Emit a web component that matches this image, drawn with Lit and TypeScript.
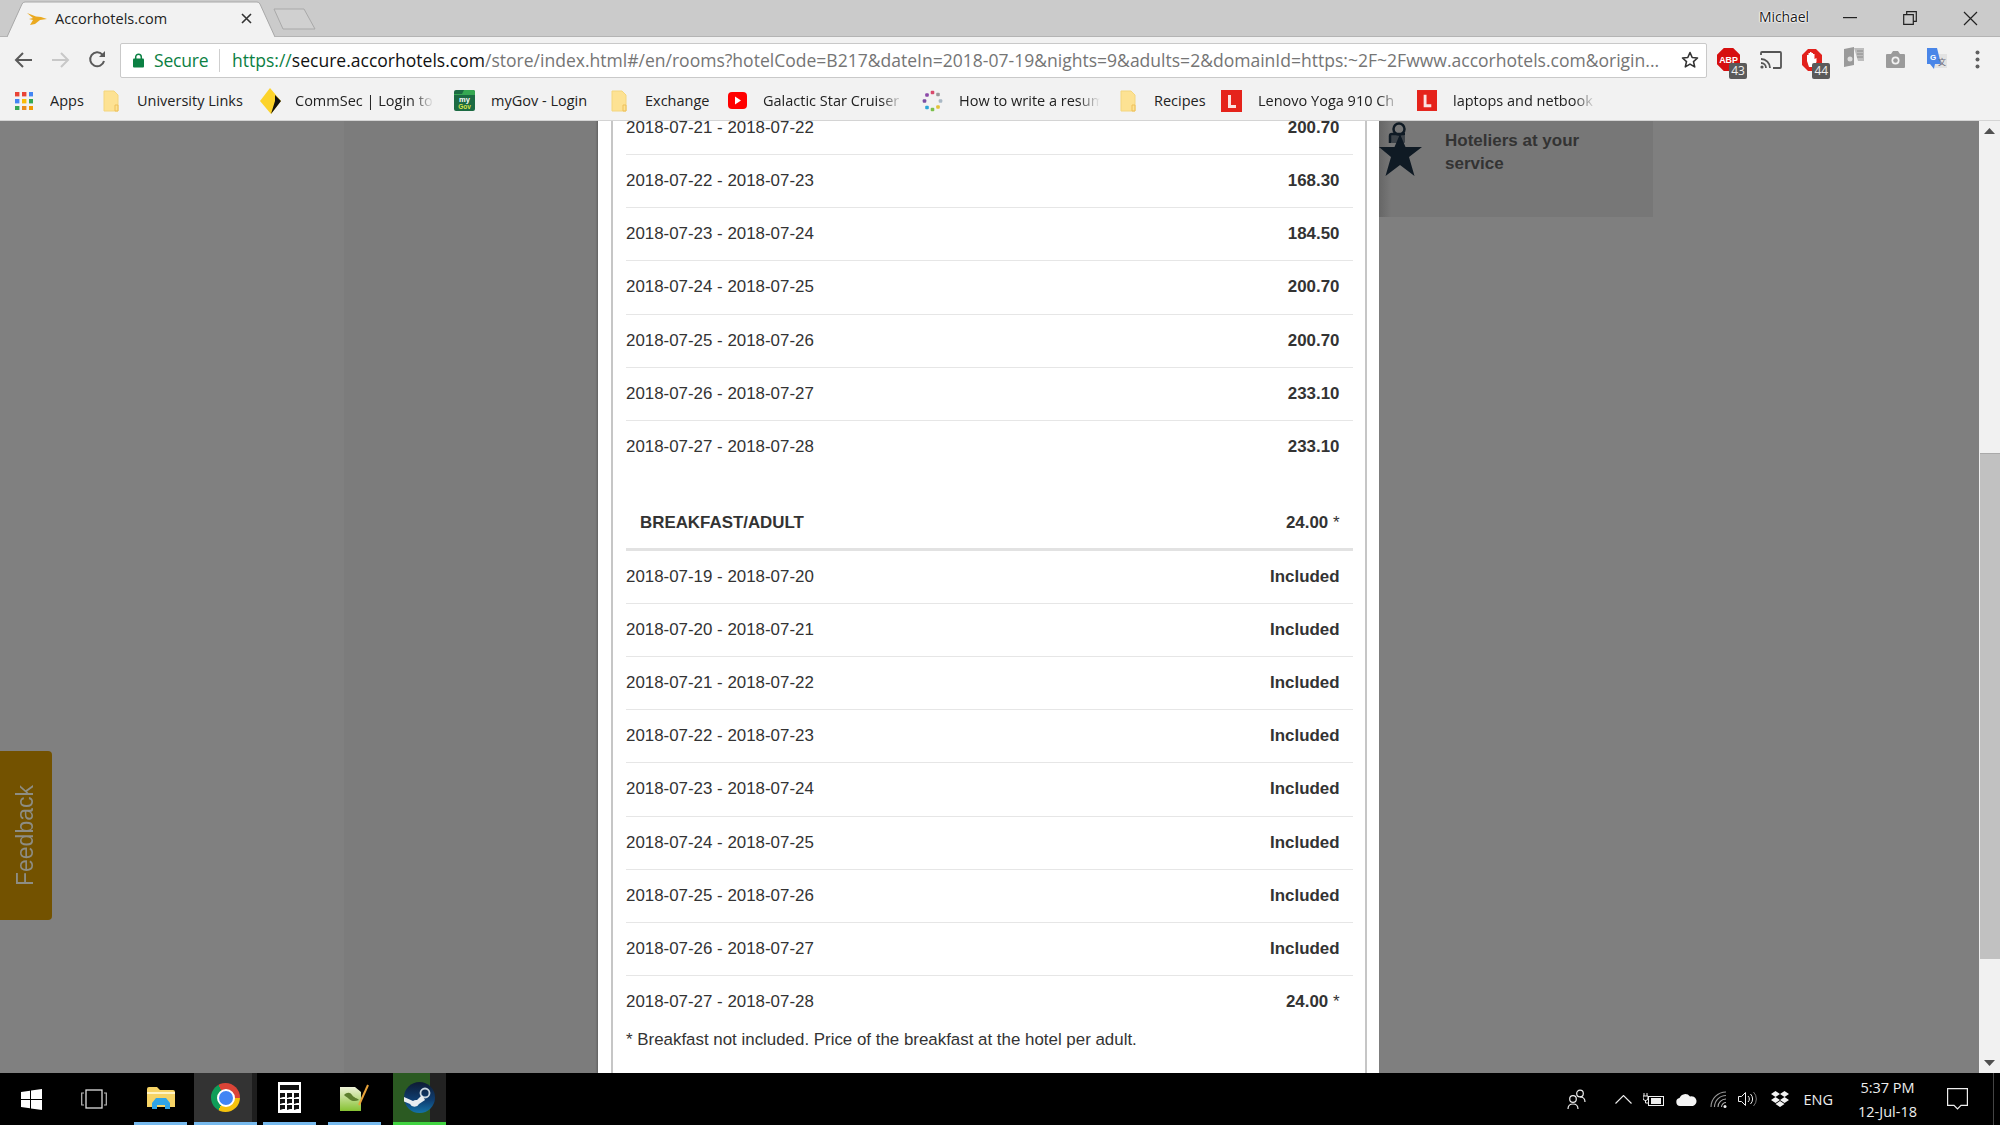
import { LitElement, html, css, svg } from "lit";
import { customElement } from "lit/decorators.js";

const folder = svg`<svg width="16" height="22" viewBox="0 0 16 22"><path d="M1 1h10l4 4v16H1z" fill="#fde293" stroke="#f4d67e"/><path d="M12 15h3v6h-3z" fill="none" stroke="#eec05a"/></svg>`;
const redL = (w: number) => svg`<svg width="${w}" height="${w + 1}" viewBox="0 0 21 22"><rect width="21" height="22" fill="#e5231b"/><path d="M7 5h3v10h5v3H7z" fill="#fbe3e1"/></svg>`;

type Bm = { n: string; w: number; g: number; lw: number; fade?: boolean; icon: unknown };
const bookmarks: Bm[] = [
  { n: "Apps", w: 88, g: 35, lw: 40, icon: svg`<svg width="18" height="18" viewBox="0 0 18 18">
    ${[0, 7, 14].map((y, r) => [0, 7, 14].map((x, c) => svg`<rect x="${x}" y="${y}" width="4.4" height="4.4" fill="${[["#e94335", "#e94335", "#4285f4"], ["#4285f4", "#fbbc05", "#34a853"], ["#34a853", "#ea8a1c", "#f29900"]][r][c]}"/>`))}</svg>` },
  { n: "University Links", w: 156, g: 34, lw: 110, icon: folder },
  { n: "CommSec | Login to", w: 195, g: 36, lw: 139, fade: true, icon: svg`<svg width="23" height="28" viewBox="0 0 23 28"><path d="M11 1l11 13-10 13L1 14z" fill="#fcd32a"/><path d="M16 8l6 6-10 13 4-13z" fill="#111"/></svg>` },
  { n: "myGov - Login", w: 157, g: 37, lw: 108, icon: svg`<svg width="21" height="21" viewBox="0 0 21 21"><rect width="21" height="21" rx="2" fill="#1c6b43"/><path d="M0 5h21V2a2 2 0 00-2-2H10L8 4H0z" fill="#36a852"/><text x="10.5" y="12" text-anchor="middle" font-size="7.5" font-weight="700" font-family="Liberation Sans" fill="#fff">my</text><text x="10.5" y="19" text-anchor="middle" font-size="6.5" font-weight="700" font-family="Liberation Sans" fill="#d8e24a">Gov</text></svg>` },
  { n: "Exchange", w: 117, g: 34, lw: 70, icon: folder },
  { n: "Galactic Star Cruiser", w: 194, g: 35, lw: 140, fade: true, icon: svg`<svg width="19" height="17" viewBox="0 0 19 17"><rect width="19" height="17" rx="4" fill="#f00"/><path d="M7 4.500l6 4-6 4z" fill="#fff"/></svg>` },
  { n: "How to write a resume", w: 198, g: 37, lw: 141, fade: true, icon: svg`<svg width="21" height="22" viewBox="0 0 21 22">
    ${[["10.5", "2.5", "#d94a6c"], ["16", "4.5", "#9a9a9a"], ["18.5", "11", "#a9b8c4"], ["16", "17", "#e3c23a"], ["10.5", "19.5", "#7cc04b"], ["5", "17.5", "#2ba6d8"], ["2.5", "11", "#7a4fa3"], ["5", "5", "#8c4aa8"]].map(([x, y, f]) => svg`<rect x="${+x - 1.8}" y="${+y - 1.8}" width="3.6" height="3.6" rx="1" fill="${f}"/>`)}</svg>` },
  { n: "Recipes", w: 101, g: 34, lw: 60, icon: folder },
  { n: "Lenovo Yoga 910 Ch", w: 196, g: 37, lw: 142, fade: true, icon: redL(21) },
  { n: "laptops and netbook", w: 190, g: 36, lw: 143, fade: true, icon: redL(20) },
];

const rates = [
  ["2018-07-21 - 2018-07-22", "200.70"],
  ["2018-07-22 - 2018-07-23", "168.30"],
  ["2018-07-23 - 2018-07-24", "184.50"],
  ["2018-07-24 - 2018-07-25", "200.70"],
  ["2018-07-25 - 2018-07-26", "200.70"],
  ["2018-07-26 - 2018-07-27", "233.10"],
  ["2018-07-27 - 2018-07-28", "233.10"],
];
const breakfast = [
  "2018-07-19 - 2018-07-20",
  "2018-07-20 - 2018-07-21",
  "2018-07-21 - 2018-07-22",
  "2018-07-22 - 2018-07-23",
  "2018-07-23 - 2018-07-24",
  "2018-07-24 - 2018-07-25",
  "2018-07-25 - 2018-07-26",
  "2018-07-26 - 2018-07-27",
];

@customElement("app-root")
export class AppRoot extends LitElement {
  static styles = css`
    :host { display: flex; flex-direction: column; width: 2000px; height: 1125px; overflow: hidden; font-family: "Liberation Sans", Arial, sans-serif; color: #333; }
    .ui { font-family: "Open Sans", "Noto Sans", sans-serif; }

    .strip { height: 37px; flex: none; background: #cbcbcb; border-bottom: 1px solid #b4b4b4; box-sizing: border-box; display: flex; align-items: flex-start; }
    .tab { position: relative; width: 268px; height: 37px; margin-left: 7px; display: flex; align-items: center; flex: none; }
    .tab-shape { position: absolute; inset: 0; }
    .tab > :not(.tab-shape) { position: relative; }
    .tab-logo { margin-left: 20px; }
    .tab-title { margin-left: 8px; width: 186px; font-size: 14.5px; color: #222; }
    .newtab { margin: 8px 0 0 -2px; }
    .who { margin-left: auto; width: 50px; margin-top: 8px; font-size: 14px; line-height: 18px; color: #1a1a1a; letter-spacing: -0.1px; white-space: nowrap; text-shadow: 0 0 2px #fff, 0 0 2px #fff, 0 0 2px #fff, 0 0 1px #fff; }
    .winbtns { display: flex; margin-left: 11px; height: 36px; align-items: center; }
    .winbtn { width: 60px; height: 36px; display: flex; align-items: center; justify-content: center; }

    .toolbar { height: 45px; flex: none; background: #f2f2f2; display: flex; align-items: center; }
    .nav { display: flex; align-items: center; width: 120px; flex: none; padding-left: 14px; gap: 18px; box-sizing: border-box; }
    .omni { width: 1587px; height: 35px; flex: none; box-sizing: border-box; background: #fff; border: 1px solid #c9c9c9; border-radius: 2px; display: flex; align-items: center; margin-top: 1px; }
    .lock { margin-left: 12px; flex: none; }
    .secure { margin-left: 10px; width: 55px; color: #0b8043; font-size: 17.5px; letter-spacing: -0.2px; flex: none; }
    .sep { width: 1px; height: 23px; background: #cfcfcf; margin: 0 12px 0 10px; flex: none; }
    .url { width: 1427px; flex: none; white-space: nowrap; overflow: hidden; font-size: 17.55px; color: #757575; }
    .url .g { color: #0b8043; }
    .url .h { color: #111; }
    .omnistar { margin-left: 22px; flex: none; }
    .exts { display: flex; align-items: center; margin-left: 1px; }
    .ext { position: relative; width: 41.7px; height: 36px; display: flex; align-items: center; justify-content: center; }
    .ext.dots { width: 38px; }
    .raised { margin-top: -6px; }
    .badge { position: absolute; left: 21px; top: 21px; width: 18px; height: 16px; background: #5a5a5a; border-radius: 2px; color: #f0f0f0; font-size: 12px; line-height: 16px; text-align: center; }

    .bookmarks { height: 39px; flex: none; background: #f2f2f2; border-bottom: 1px solid #d4d4d4; box-sizing: border-box; display: flex; align-items: center; padding: 0 0 1px 15px; }
    .bm { display: flex; align-items: center; flex: none; }
    .bm-icon { display: flex; align-items: center; flex: none; }
    .bm-label { font-size: 14.5px; color: #222; white-space: nowrap; overflow: hidden; }
    .fade { -webkit-mask-image: linear-gradient(to right, #000 calc(100% - 22px), transparent); mask-image: linear-gradient(to right, #000 calc(100% - 22px), transparent); }

    .page { flex: 1; min-height: 0; display: flex; position: relative; overflow: hidden; background: #7f7f7f; }
    .gutter { width: 598px; flex: none; display: flex; }
    .g1 { width: 344px; background: #808080; }
    .g2 { flex: 1; background: #7c7c7c; }
    .panel { width: 781px; flex: none; background: #fff; padding: 0 12px 0 13px; box-sizing: border-box; margin-top: -19px; box-shadow: -1px 0 2px rgba(0,0,0,.25); }
    .box { height: 100%; border-left: 2px solid #c6c6c6; border-right: 2px solid #c6c6c6; padding: 0 12.5px 0 13px; box-sizing: border-box; }
    .row { height: 53.125px; box-sizing: border-box; display: flex; align-items: center; justify-content: space-between; padding-right: 13px; font-size: 16.9px; border-bottom: 1.5px solid #e6e6e6; }
    .row.last { border-bottom: none; }
    .row b { font-weight: 700; }
    .asterisk { font-weight: 400; }
    .head { height: 77px; box-sizing: border-box; display: flex; align-items: flex-end; justify-content: space-between; padding: 0 13px 14.5px 14px; font-size: 16.9px; line-height: 20px; font-weight: 700; border-bottom: 3px solid #e2e2e2; }
    .note { font-size: 16.9px; line-height: 20px; margin-top: 1px; }
    .side { flex: 1; display: block; }
    .card { width: 274px; height: 96px; background: linear-gradient(to right, #666 0, #777 12px); display: flex; }
    .star { flex: none; }
    .card-text { margin: 8px 0 0 22px; font-size: 17px; line-height: 23px; font-weight: 700; color: #333; }
    .sb { width: 21px; flex: none; background: #f1f1f1; display: flex; flex-direction: column; align-items: center; }
    .sb-up { margin-top: 7px; flex: none; }
    .sb-thumb { width: 20px; height: 506px; background: #c1c1c1; margin: 319px 0 0 1px; flex: none; border-top: 1px solid #aaa; box-sizing: border-box; }
    .sb-down { margin-top: auto; margin-bottom: 7px; flex: none; }
    .feedback { position: absolute; left: 0; top: 630px; width: 52px; height: 169px; box-sizing: border-box; padding-right: 2px; background: #735200; border-radius: 0 4px 4px 0; display: flex; align-items: center; justify-content: center; }
    .feedback span { writing-mode: vertical-rl; transform: rotate(180deg); font-size: 23px; color: #8d8d84; line-height: 1; }

    .taskbar { height: 52px; flex: none; background: #000; display: flex; align-items: stretch; color: #f0f0f0; }
    .ts { width: 63px; flex: none; display: flex; align-items: center; justify-content: center; }
    .ts.tv { width: 62px; }
    .tapp { width: 53px; flex: none; margin: 0 6px; box-sizing: border-box; border-bottom: 3px solid #76b9ed; display: flex; align-items: center; justify-content: center; }
    .tapp.first { margin: 0 7px 0 9px; }
    .tapp.chrome { width: 63px; margin: 0; background: linear-gradient(to right, #333 0 58px, #1e1e1e 58px); }
    .tapp.steam { background: linear-gradient(to right, #2b5a22 0 37px, #222 37px); border-bottom-color: #3fd33f; }
    .chrome-logo { width: 29px; height: 29px; border-radius: 50%; background: conic-gradient(from -30deg, #db4437 0 120deg, #f4c20d 120deg 240deg, #0f9d58 240deg 360deg); display: flex; align-items: center; justify-content: center; }
    .chrome-logo i { width: 14px; height: 14px; border-radius: 50%; background: #4285f4; border: 2.5px solid #fff; }
    .tray { margin-left: auto; display: flex; align-items: center; }
    .tray-item { flex: none; display: flex; align-items: center; justify-content: center; }
    .m29 { margin-right: 29px; }
    .m11 { margin-right: 11px; }
    .m13 { margin-right: 13px; }
    .eng { font-size: 14.5px; margin-left: 15px; width: 30px; color: #eee; }
    .clock { width: 92px; margin-left: 8px; padding-top: 1px; text-align: center; font-size: 14.5px; line-height: 24px; color: #eee; }
    .notif { margin-left: 13.5px; }
    .desk { width: 1px; align-self: stretch; background: #444; margin-left: 25px; margin-right: 6px; }
  `;

  render() {
    return html`
      <div class="strip ui">
        <div class="tab">
          <svg class="tab-shape" width="268" height="37" viewBox="0 0 268 37"><path d="M0 37 L15 4 Q16 2 18 2 H250 Q252 2 253 4 L268 37" fill="#f2f2f2" stroke="#a8a8a8"/></svg>
          <svg class="tab-logo" width="20" height="14" viewBox="0 0 20 14"><path d="M0 1l9 3.500 5 .5 6 2-7 1-5 4-5 1 3-5-4-1 4-1z" fill="#eaa91f"/></svg>
          <span class="tab-title">Accorhotels.com</span>
          <svg width="11" height="11" viewBox="0 0 11 11"><path d="M1 1l9 9M10 1l-9 9" stroke="#333" stroke-width="1.6"/></svg>
        </div>
        <svg class="newtab" width="44" height="22" viewBox="0 0 44 22"><path d="M1 1h30l11 20H10z" fill="#d0d0d0" stroke="#a9a9a9" stroke-linejoin="round"/></svg>
        <span class="who">Michael</span>
        <div class="winbtns">
          <div class="winbtn"><svg width="14" height="2" viewBox="0 0 14 2"><rect width="14" height="1.2" fill="#222"/></svg></div>
          <div class="winbtn"><svg width="14" height="14" viewBox="0 0 14 14"><path d="M.7 3.700h9.600v9.600H.7zM3.700 3.500V.7h9.600v9.600h-2.800" fill="none" stroke="#222" stroke-width="1.2"/></svg></div>
          <div class="winbtn"><svg width="15" height="15" viewBox="0 0 15 15"><path d="M1 1l13 13M14 1L1 14" stroke="#222" stroke-width="1.2"/></svg></div>
        </div>
      </div>

      <div class="toolbar ui">
        <div class="nav">
          <svg width="19" height="18" viewBox="0 0 19 18"><path d="M18 9H2M9 2L2 9l7 7" fill="none" stroke="#5a5a5a" stroke-width="2"/></svg>
          <svg width="19" height="18" viewBox="0 0 19 18"><path d="M1 9h16M10 2l7 7-7 7" fill="none" stroke="#c8c8c8" stroke-width="2"/></svg>
          <svg width="19" height="19" viewBox="0 0 19 19"><path d="M16 11a7 7 0 1 1-1.600-6.400" fill="none" stroke="#5a5a5a" stroke-width="2"/><path d="M17 1v6h-6z" fill="#5a5a5a"/></svg>
        </div>
        <div class="omni">
          <svg class="lock" width="11" height="15" viewBox="0 0 11 15"><path d="M2.700 6V4a2.800 2.800 0 0 1 5.600 0v2" fill="none" stroke="#0b8043" stroke-width="1.5"/><rect y="5.500" width="11" height="9" rx="1" fill="#0b8043"/></svg>
          <span class="secure">Secure</span>
          <span class="sep"></span>
          <span class="url"><span class="g">https://</span><span class="h">secure.accorhotels.com</span>/store/index.html#/en/rooms?hotelCode=B217&amp;dateIn=2018-07-19&amp;nights=9&amp;adults=2&amp;domainId=https:~2F~2Fwww.accorhotels.com&amp;origin...</span>
          <svg class="omnistar" width="18" height="18" viewBox="0 0 18 18"><path d="M9 1.500l2.200 5 5.300.5-4 3.600 1.200 5.300L9 13.100l-4.700 2.800 1.200-5.300-4-3.600 5.300-.5z" fill="none" stroke="#333" stroke-width="1.6" stroke-linejoin="round"/></svg>
        </div>
        <div class="exts">
          <div class="ext">
            <svg width="23" height="23" viewBox="0 0 22 22"><path d="M6.500 0h9L22 6.500v9L15.500 22h-9L0 15.500v-9z" fill="#d60f0f"/><text x="11" y="14" text-anchor="middle" font-size="8.500" font-weight="700" font-family="Liberation Sans" fill="#fff">ABP</text></svg>
            <span class="badge">43</span>
          </div>
          <div class="ext">
            <svg width="22" height="18" viewBox="0 0 22 18"><path d="M1 4V2a1 1 0 0 1 1-1h18a1 1 0 0 1 1 1v14a1 1 0 0 1-1 1h-7" fill="none" stroke="#555" stroke-width="1.800"/><path d="M1 8a9 9 0 0 1 9 9M1 12a5 5 0 0 1 5 5" fill="none" stroke="#555" stroke-width="1.800"/><circle cx="2" cy="16" r="1.600" fill="#555"/></svg>
          </div>
          <div class="ext">
            <svg width="20" height="22" viewBox="0 0 20 22"><path d="M6 0h8l6 6v10l-6 6H6l-6-6V6z" fill="#e2211c"/><path d="M5 12V6h1.500v-2h1.500v-1h1.500v1h1.500v1h1.500v5l2-1v4l-3 5H7z" fill="#fff"/></svg>
            <span class="badge">44</span>
          </div>
          <div class="ext">
            <svg class="raised" width="20" height="20" viewBox="0 0 20 20"><path d="M0 2l10-2v18l-10 2z" fill="#9a9a9a"/><path d="M10 1h10v13h-6" fill="#bdbdbd"/><path d="M13 4h6M13 7h6M13 10h6" stroke="#8a8a8a"/><circle cx="6" cy="12" r="2.500" fill="#dedede"/></svg>
          </div>
          <div class="ext">
            <svg width="19" height="17" viewBox="0 0 19 17"><path d="M1 3h4l2-3h5l2 3h4a1 1 0 0 1 1 1v12a1 1 0 0 1-1 1H1a1 1 0 0 1-1-1V4a1 1 0 0 1 1-1z" fill="#9b9b9b"/><circle cx="9.500" cy="9.500" r="4" fill="#f2f2f2"/><circle cx="9.500" cy="9.500" r="2.300" fill="#9b9b9b"/></svg>
          </div>
          <div class="ext">
            <svg width="20" height="23" viewBox="0 0 20 23"><rect x="8" y="6" width="12" height="14" fill="#e3e3e3"/><path d="M0 0h10l4 16H8l-1 5-4-5H0z" fill="#4a86e8"/><text x="6" y="12" text-anchor="middle" font-size="8" font-weight="700" font-family="Liberation Sans" fill="#fff">G</text><text x="15" y="17" text-anchor="middle" font-size="8" font-family="Liberation Sans, Noto Sans CJK SC, sans-serif" fill="#667">文</text></svg>
          </div>
          <div class="ext dots">
            <svg width="5" height="19" viewBox="0 0 5 19"><circle cx="2.500" cy="2.500" r="2" fill="#5f5f5f"/><circle cx="2.500" cy="9.500" r="2" fill="#5f5f5f"/><circle cx="2.500" cy="16.500" r="2" fill="#5f5f5f"/></svg>
          </div>
        </div>
      </div>

      <div class="bookmarks ui">
        ${bookmarks.map(
          (b) => html`<div class="bm" style="width:${b.w}px">
            <span class="bm-icon" style="width:${b.g}px">${b.icon}</span>
            <span class="bm-label ${b.fade ? "fade" : ""}" style="width:${b.lw}px">${b.n}</span>
          </div>`
        )}
      </div>

      <div class="page">
        <div class="gutter"><div class="g1"></div><div class="g2"></div></div>
        <div class="panel">
          <div class="box">
            ${rates.map(
              ([d, v], i) => html`<div class="row ${i === rates.length - 1 ? "last" : ""}"><span>${d}</span><b>${v}</b></div>`
            )}
            <div class="head"><span>BREAKFAST/ADULT</span><span>24.00 <span class="asterisk">*</span></span></div>
            ${breakfast.map((d) => html`<div class="row"><span>${d}</span><b>Included</b></div>`)}
            <div class="row last"><span>2018-07-27 - 2018-07-28</span><b>24.00 <span class="asterisk">*</span></b></div>
            <div class="note">* Breakfast not included. Price of the breakfast at the hotel per adult.</div>
          </div>
        </div>
        <div class="side">
          <div class="card">
            <svg class="star" width="44" height="56" viewBox="0 0 44 56"><path d="M21 13l5.500 13H43L30 36l5.500 19L21 44 6.500 55 12 36 0 26h15.500z" fill="#0f1a24"/><circle cx="20" cy="8" r="5.500" fill="none" stroke="#0f1a24" stroke-width="2.500"/><path d="M11 22v-7a2 2 0 0 1 2-2h13" fill="none" stroke="#0f1a24" stroke-width="2.500"/><rect x="12" y="14" width="14" height="8" rx="1" fill="#0f1a24" opacity=".55"/></svg>
            <div class="card-text">Hoteliers at your<br />service</div>
          </div>
        </div>
        <div class="sb">
          <svg class="sb-up" width="11" height="6" viewBox="0 0 11 6"><path d="M5.500 0l5.500 6H0z" fill="#505050"/></svg>
          <div class="sb-thumb"></div>
          <svg class="sb-down" width="11" height="6" viewBox="0 0 11 6"><path d="M0 0h11L5.500 6z" fill="#505050"/></svg>
        </div>
        <div class="feedback"><span>Feedback</span></div>
      </div>

      <div class="taskbar ui">
        <div class="ts"><svg width="21" height="21" viewBox="0 0 21 21"><path d="M0 3l9-1.300V10H0zM10 1.500L21 0v10H10zM0 11h9v8.300L0 18zM10 11h11v10l-11-1.500z" fill="#fff"/></svg></div>
        <div class="ts tv"><svg width="26" height="20" viewBox="0 0 26 20"><rect x="5" y="1" width="16" height="18" fill="none" stroke="#ddd" stroke-width="1.300"/><path d="M3 4H.7v12H3M23 4h2.300v12H23" fill="none" stroke="#bbb" stroke-width="1.200"/></svg></div>
        <div class="tapp first"><svg width="28" height="23" viewBox="0 0 28 23"><path d="M0 3a2 2 0 0 1 2-2h8l3 3h13a2 2 0 0 1 2 2v15H0z" fill="#f6d365"/><path d="M0 6h28v2H0z" fill="#fff3c4"/><path d="M5 23v-6l4-5h10l4 5v6h-5v-4H10v4z" fill="#2fa4e7"/></svg></div>
        <div class="tapp chrome"><div class="chrome-logo"><i></i></div></div>
        <div class="tapp"><svg width="23" height="31" viewBox="0 0 23 31"><rect width="23" height="31" fill="#fff"/><rect x="2" y="3" width="19" height="5" fill="#111"/>${[11, 17, 23].map((y) => [2, 9, 16].map((x) => svg`<path d="M${x} ${y}h5v4h-2l-3 1z" fill="#111"/>`))}</svg></div>
        <div class="tapp"><svg width="29" height="28" viewBox="0 0 29 28"><defs><linearGradient id="np" x1="0" y1="0" x2="0" y2="1"><stop offset="0" stop-color="#eef2d8"/><stop offset="1" stop-color="#86c232"/></linearGradient></defs><path d="M0 3h15l6 5v19H0z" fill="url(#np)"/><path d="M4 11c3-3 6-3 8 0s5 3 7 5c-4 2-8 1-10-1s-3-2-5-4z" fill="#5d7f2e"/><path d="M19 21L28 1" stroke="#e8a33a" stroke-width="2"/></svg></div>
        <div class="tapp steam"><svg width="31" height="31" viewBox="0 0 31 31"><defs><linearGradient id="st" x1="0" y1="0" x2="0" y2="1"><stop offset="0" stop-color="#0e1b33"/><stop offset=".6" stop-color="#0f3f72"/><stop offset="1" stop-color="#1473a8"/></linearGradient></defs><circle cx="15.500" cy="15.500" r="15.500" fill="url(#st)"/><circle cx="21" cy="11" r="4.500" fill="none" stroke="#c9d6df" stroke-width="1.800"/><path d="M0 15l9 4a5 5 0 0 1 4-1l5-5 3 5-6 4a5 5 0 0 1-9 0l-6-2.500z" fill="#e8edf0"/></svg></div>

        <div class="tray">
          <span class="tray-item m29"><svg width="19" height="21" viewBox="0 0 19 21"><circle cx="13" cy="4.500" r="3.300" fill="none" stroke="#eee" stroke-width="1.200"/><circle cx="6" cy="10" r="3.300" fill="none" stroke="#eee" stroke-width="1.200"/><path d="M1 20c0-3 2-5 5-5s5 2 5 5M13 8c3 0 5 2 5 5" fill="none" stroke="#eee" stroke-width="1.200"/></svg></span>
          <span class="tray-item m11"><svg width="17" height="9" viewBox="0 0 17 9"><path d="M.5 8.500l8-8 8 8" fill="none" stroke="#eee" stroke-width="1.100"/></svg></span>
          <span class="tray-item m11"><svg width="22" height="15" viewBox="0 0 22 15"><path d="M1 1v3M4 1v3M0 4h5v2a2.500 2.500 0 0 1-5 0zM2.500 8v3h3" fill="none" stroke="#eee"/><rect x="5.500" y="4.500" width="15" height="9" fill="none" stroke="#eee"/><rect x="8" y="6" width="10" height="6" fill="#eee"/></svg></span>
          <span class="tray-item m13"><svg width="21" height="13" viewBox="0 0 21 13"><path d="M4 13a4 4 0 0 1-.5-7.900A6 6 0 0 1 14 3.500a4.500 4.500 0 0 1 3 9.500z" fill="#f4f4f4"/></svg></span>
          <span class="tray-item m11"><svg width="17" height="17" viewBox="0 0 17 17"><path d="M1 16a15 15 0 0 1 15-15M4.500 16A11.500 11.500 0 0 1 16 4.500" fill="none" stroke="#999" stroke-width="1.100"/><path d="M8 16a8 8 0 0 1 8-8M11.500 16a4.500 4.500 0 0 1 4.500-4.500" fill="none" stroke="#aaa" stroke-width="1.100"/><circle cx="15" cy="15.500" r="1.500" fill="#eee"/></svg></span>
          <span class="tray-item m13"><svg width="20" height="16" viewBox="0 0 20 16"><path d="M.5 5.500h3l4-4v13l-4-4h-3z" fill="none" stroke="#eee"/><path d="M10 5a4 4 0 0 1 0 6M12.500 3a7 7 0 0 1 0 10" fill="none" stroke="#eee"/><path d="M15.500 1a10 10 0 0 1 0 14" fill="none" stroke="#777"/></svg></span>
          <span class="tray-item"><svg width="18" height="16" viewBox="0 0 18 16"><path d="M4.500 0L9 3 4.500 6 0 3zM13.500 0L18 3l-4.500 3L9 3zM4.500 6L9 9l-4.500 3L0 9zM13.500 6L18 9l-4.500 3L9 9zM4.500 13L9 10l4.500 3L9 16z" fill="#f2f2f2"/></svg></span>
          <span class="eng">ENG</span>
          <div class="clock">5:37 PM<br />12-Jul-18</div>
          <span class="tray-item notif"><svg width="21" height="22" viewBox="0 0 21 22"><path d="M.6.6h19.800v16.800H14l-3.500 3.500L7 17.400H.6z" fill="none" stroke="#eee" stroke-width="1.200"/></svg></span>
          <span class="desk"></span>
        </div>
      </div>
    `;
  }
}
